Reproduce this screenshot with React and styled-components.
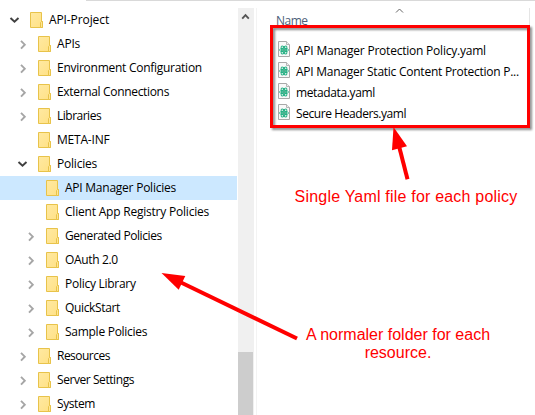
import React from 'react';
import styled, { createGlobalStyle } from 'styled-components';

const GlobalStyle = createGlobalStyle`
  * { box-sizing: border-box; }
  body { margin: 0; background: #fff; overflow: hidden; }
`;

const Explorer = styled.div`
  position: relative;
  display: flex;
  width: 535px;
  height: 415px;
  overflow: hidden;
  background: #fff;
  color: #000;
  font: 12px/24px 'Open Sans', 'Noto Sans', sans-serif;
`;

const TopRule = styled.div`
  position: absolute;
  top: 0;
  left: 86px;
  right: 0;
  height: 1px;
  background: #d9d9d9;
`;

const Tree = styled.div`
  width: 237px;
  padding-top: 8px;
`;

const TreeRow = styled.div`
  display: flex;
  align-items: center;
  height: 24px;
  padding-left: ${(p) => 8 + p.$level * 8}px;
  background: ${(p) => (p.$selected ? '#cce8ff' : 'transparent')};
`;

const Toggle = styled.span`
  display: flex;
  flex: none;
  align-items: center;
  justify-content: center;
  width: 13px;
  height: 24px;
  margin-right: 9px;
`;

const FolderSvg = styled.svg`
  flex: none;
  width: 13px;
  height: 16px;
  margin-right: 6px;
`;

const Label = styled.span`
  white-space: pre;
  letter-spacing: ${(p) => p.$spacing || 0}px;
`;

const ScrollTrack = styled.div`
  display: flex;
  flex-direction: column;
  justify-content: space-between;
  width: 16px;
  margin: 8px 2px 0 1px;
  background: #f0f0f0;
`;

const ScrollUp = styled.svg`
  width: 9px;
  height: 7px;
  margin: 5px 0 0 3px;
`;

const ScrollThumb = styled.div`
  width: 15px;
  height: 63px;
  background: #cdcdcd;
`;

const FilePane = styled.div`
  flex: 1;
  margin-top: 8px;
  border-left: 1px solid #f3f3f3;
`;

const Header = styled.div`
  display: flex;
  justify-content: space-between;
  height: 25px;
  width: 273px;
  padding-left: 19px;
  line-height: 26px;
  color: #4c607a;
  border-right: 1px solid #e5e5e5;
`;

const SortMark = styled.svg`
  width: 9px;
  height: 6px;
  margin-right: 125px;
`;

const FileRow = styled.div`
  display: flex;
  align-items: center;
  height: 21px;
  padding-left: 21px;
  line-height: 21px;
`;

const Files = styled.div`
  padding-top: 7px;
`;

const FileSvg = styled.svg`
  flex: none;
  width: 12px;
  height: 16px;
  margin: 0 6px 3px 0;
`;

const Highlight = styled.div`
  position: absolute;
  left: 270px;
  top: 25px;
  width: 260px;
  height: 103px;
  border: 3px solid #f00;
  filter: drop-shadow(2px 2px 1.2px rgba(0, 0, 0, 0.45));
`;

const Arrows = styled.svg`
  position: absolute;
  inset: 0;
  width: 535px;
  height: 415px;
`;

const Note = styled.div`
  position: absolute;
  left: ${(p) => p.$left}px;
  top: ${(p) => p.$top}px;
  width: ${(p) => p.$width}px;
  color: #f00;
  font: 16px/18px 'Liberation Sans', Arial, sans-serif;
  letter-spacing: ${(p) => p.$spacing || 0}px;
  text-align: center;
  white-space: nowrap;
`;

const Chevron = ({ open }) =>
  open ? (
    <svg width="11" height="8" viewBox="0 0 11 8">
      <path d="M1.5 2 5.5 5.8 9.5 2" fill="none" stroke="#404040" strokeWidth="1.9" />
    </svg>
  ) : (
    <svg width="8" height="11" viewBox="0 0 8 11">
      <path d="M2 1.8 5.8 5.7 2 9.6" fill="none" stroke="#a6a6a6" strokeWidth="1.9" />
    </svg>
  );

const Folder = () => (
  <FolderSvg viewBox="0 0 13 16">
    <defs>
      <linearGradient id="folderFill" x1="0" y1="0" x2="1" y2="1">
        <stop offset="0" stopColor="#ffe9a2" />
        <stop offset="1" stopColor="#ffe185" />
      </linearGradient>
    </defs>
    <path d="M.5.5h11v9h1v6H.5z" fill="url(#folderFill)" stroke="#e8c34a" />
    <path d="M10.5 15.5v-5l1-1h1v6z" fill="#ffe694" stroke="#e8c34a" />
  </FolderSvg>
);

const FileIcon = () => (
  <FileSvg viewBox="0 0 12 16">
    <path d="M.5.5h8l3 3v12H.5z" fill="#f9f9f9" stroke="#a9a9a9" />
    <path d="M8.5.5v3h3" fill="#eee" stroke="#b5b5b5" />
    <g fill="none" stroke="#23b083" strokeWidth="1">
      <ellipse cx="6" cy="9" rx="4.5" ry="1.8" />
      <ellipse cx="6" cy="9" rx="4.5" ry="1.8" transform="rotate(60 6 9)" />
      <ellipse cx="6" cy="9" rx="4.5" ry="1.8" transform="rotate(120 6 9)" />
    </g>
    <circle cx="6" cy="9" r="1" fill="#129567" />
  </FileSvg>
);

const folders = [
  { name: 'API-Project', level: 0, state: 'open', spacing: -0.1 },
  { name: 'APIs', level: 1, state: 'closed', spacing: -0.2 },
  { name: 'Environment Configuration', level: 1, state: 'closed', spacing: -0.27 },
  { name: 'External Connections', level: 1, state: 'closed', spacing: -0.33 },
  { name: 'Libraries', level: 1, state: 'closed', spacing: -0.5 },
  { name: 'META-INF', level: 1, spacing: -0.2 },
  { name: 'Policies', level: 1, state: 'open', spacing: -0.2 },
  { name: 'API Manager Policies', level: 2, selected: true, spacing: -0.24 },
  { name: 'Client App Registry Policies', level: 2, spacing: -0.21 },
  { name: 'Generated Policies', level: 2, state: 'closed', spacing: -0.42 },
  { name: 'OAuth 2.0', level: 2, state: 'closed', spacing: -0.35 },
  { name: 'Policy Library', level: 2, state: 'closed', spacing: -0.27 },
  { name: 'QuickStart', level: 2, state: 'closed', spacing: -0.35 },
  { name: 'Sample Policies', level: 2, state: 'closed', spacing: -0.27 },
  { name: 'Resources', level: 1, state: 'closed', spacing: -0.52 },
  { name: 'Server Settings', level: 1, state: 'closed', spacing: -0.43 },
  { name: 'System', level: 1, state: 'closed', spacing: -0.4 },
];

const files = [
  { name: 'API Manager Protection Policy.yaml', spacing: -0.22 },
  { name: 'API Manager Static Content Protection P...', spacing: -0.25 },
  { name: 'metadata.yaml', spacing: -0.37 },
  { name: 'Secure Headers.yaml', spacing: -0.42 },
];

export default function App() {
  return (
    <>
      <GlobalStyle />
      <Explorer>
        <TopRule />
        <Tree>
          {folders.map((f) => (
            <TreeRow key={f.name} $level={f.level} $selected={f.selected}>
              <Toggle>{f.state && <Chevron open={f.state === 'open'} />}</Toggle>
              <Folder />
              <Label $spacing={f.spacing}>{f.name}</Label>
            </TreeRow>
          ))}
        </Tree>
        <ScrollTrack>
          <ScrollUp viewBox="0 0 9 7">
            <path d="M1.2 5.6 4.5 2.2 7.8 5.6" fill="none" stroke="#555" strokeWidth="1.9" />
          </ScrollUp>
          <ScrollThumb />
        </ScrollTrack>
        <FilePane>
          <Header>
            <Label $spacing={-0.5}>Name</Label>
            <SortMark viewBox="0 0 9 6">
              <path d="M1 4.5 4.5 1 8 4.5" fill="none" stroke="#666" />
            </SortMark>
          </Header>
          <Files>
            {files.map((f) => (
              <FileRow key={f.name}>
                <FileIcon />
                <Label $spacing={f.spacing}>{f.name}</Label>
              </FileRow>
            ))}
          </Files>
        </FilePane>
        <Highlight />
        <Arrows viewBox="0 0 535 415">
          <g fill="#f00" stroke="#f00">
            <path d="M393.5 127 407 146.3 392 150.3z" stroke="none" />
            <path d="M399 146 407.5 179.3" strokeWidth="4" />
            <path d="M161.5 273 185.3 276 178.7 289.7z" stroke="none" />
            <path d="M180 282 297 338.5" strokeWidth="4" />
          </g>
        </Arrows>
        <Note $left={294} $top={188} $width={224} $spacing={0.2}>Single Yaml file for each policy</Note>
        <Note $left={298} $top={326} $width={200}>
          A normaler folder for each
          <br />
          resource.
        </Note>
      </Explorer>
    </>
  );
}
